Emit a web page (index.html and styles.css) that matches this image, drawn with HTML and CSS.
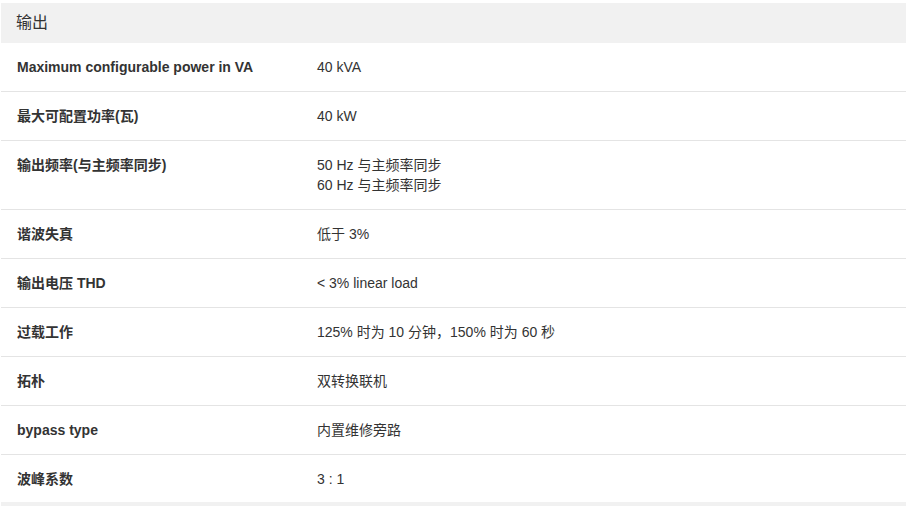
FILE: index.html
```html
<!DOCTYPE html>
<html lang="zh">
<head>
<meta charset="utf-8">
<link rel="stylesheet" href="styles.css">
</head>
<body>
<div class="spec">
  <div class="spec-head">输出</div>
  <div class="row"><div class="label">Maximum configurable power in VA</div><div class="value">40 kVA</div></div>
  <div class="row"><div class="label">最大可配置功率(瓦)</div><div class="value">40 kW</div></div>
  <div class="row"><div class="label">输出频率(与主频率同步)</div><div class="value">50 Hz 与主频率同步<br>60 Hz 与主频率同步</div></div>
  <div class="row"><div class="label">谐波失真</div><div class="value">低于 3%</div></div>
  <div class="row"><div class="label">输出电压 THD</div><div class="value">&lt; 3% linear load</div></div>
  <div class="row"><div class="label">过载工作</div><div class="value">125% 时为 10 分钟，150% 时为 60 秒</div></div>
  <div class="row"><div class="label">拓朴</div><div class="value">双转换联机</div></div>
  <div class="row"><div class="label">bypass type</div><div class="value">内置维修旁路</div></div>
  <div class="row last"><div class="label">波峰系数</div><div class="value">3 : 1</div></div>
  <div class="spec-head next"></div>
</div>
</body>
</html>
```
FILE: styles.css
```css
html, body {
  margin: 0;
  padding: 0;
  background: #fff;
}
.spec {
  margin: 3px 2px 0 1px;
  font-family: "Liberation Sans", Arial, "Noto Sans CJK SC", sans-serif;
  color: #333;
}
.spec-head {
  background: #f1f1f1;
  height: 40px;
  line-height: 40px;
  padding-left: 15px;
  font-size: 16px;
  color: #333;
}
.row {
  display: flex;
  padding: 14px 0;
  font-size: 14px;
  line-height: 20px;
  height: auto;
  border-bottom: 1px solid #e4e4e4;
}
.row.last {
  border-bottom: none;
  padding-bottom: 13px;
}
.label {
  width: 300px;
  padding-left: 16px;
  font-weight: bold;
  flex: none;
}
.value {
  flex: 1;
}
.label, .value {
  height: auto;
  max-height: none;
}
```
